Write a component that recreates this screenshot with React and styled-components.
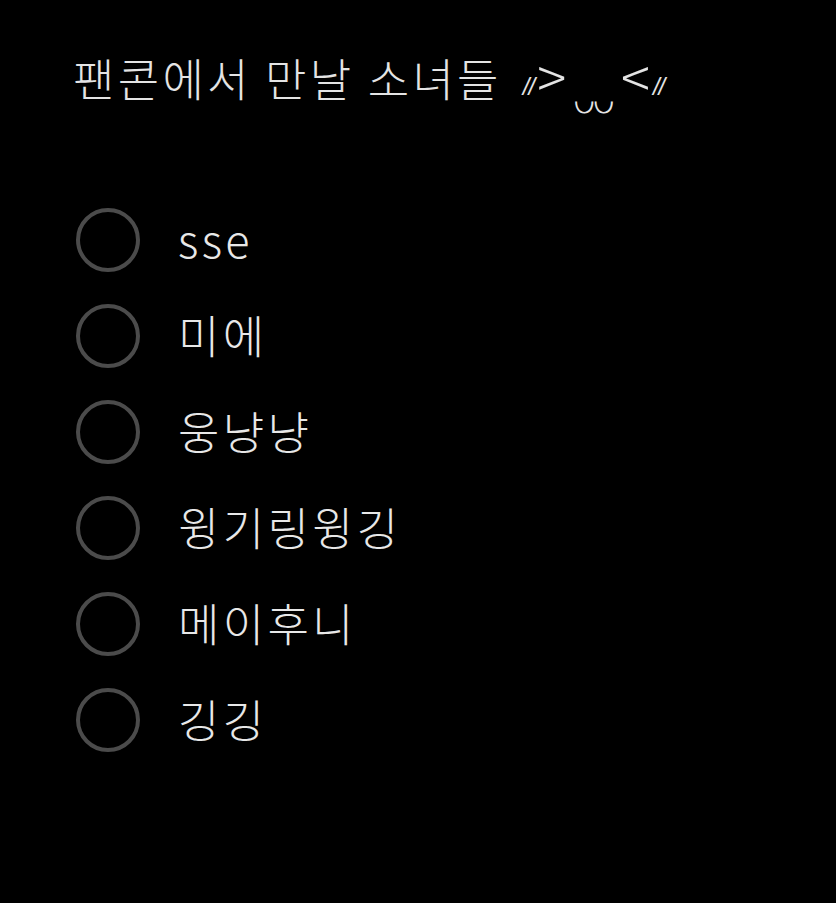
import React from 'react';
import styled, { createGlobalStyle } from 'styled-components';

const GlobalStyle = createGlobalStyle`
  html, body {
    margin: 0;
    padding: 0;
    background: #000;
  }
  body {
    font-family: "Noto Sans CJK KR", "Noto Sans", sans-serif;
  }
`;

const Page = styled.div`
  min-height: 903px;
  background: #000;
  padding: 46px 0 0 73px;
  box-sizing: border-box;
`;

const Title = styled.h1`
  margin: 0;
  display: flex;
  align-items: center;
  font-size: 45px;
  font-weight: 300;
  line-height: 64px;
  letter-spacing: 3.3px;
  color: #e4e4e4;
  white-space: pre;
`;

const Face = styled.span`
  display: inline-flex;
  align-items: flex-end;
  margin-left: 18px;
  letter-spacing: 0;
  color: #e4e4e4;
  height: 64px;
`;

const Blush = styled.span`
  font-family: "Liberation Sans", sans-serif;
  font-size: 24px;
  line-height: 1;
  letter-spacing: -1px;
  font-style: italic;
  margin: 0 3px 11px 3px;
`;

const Eye = styled.span`
  font-size: 54px;
  font-weight: 300;
  line-height: 1;
  margin-bottom: 8px;
`;

const Mouth = styled.span`
  font-family: "DejaVu Sans", sans-serif;
  font-size: 40px;
  line-height: 1;
  letter-spacing: -5px;
  margin: 0 10px -9px 6px;
`;

const Options = styled.ul`
  list-style: none;
  margin: 98px 0 0 0;
  padding: 0;
  display: flex;
  flex-direction: column;
  gap: 32px;
`;

const Option = styled.li`
  display: flex;
  align-items: center;
  gap: 38px;
  height: 64px;
  cursor: pointer;
`;

const Radio = styled.span`
  width: 64px;
  height: 64px;
  margin-left: 3px;
  box-sizing: border-box;
  border-radius: 50%;
  border: 4px solid ${(props) => (props.checked ? '#e6e6e6' : '#4b4b4b')};
  flex-shrink: 0;
`;

const Label = styled.span`
  font-size: 45px;
  font-weight: 300;
  line-height: 64px;
  letter-spacing: 3.3px;
  color: #e8e8e8;
  margin-top: -2px;
`;

const choices = ['sse', '미에', '웅냥냥', '윙기링윙깅', '메이후니', '깅깅'];

const App = () => {
  return (
    <>
      <GlobalStyle />
      <Page>
        <Title>
          팬콘에서 만날 소녀들
          <Face>
            <Blush>//</Blush>
            <Eye>&gt;</Eye>
            <Mouth>ᴗᴗ</Mouth>
            <Eye>&lt;</Eye>
            <Blush>//</Blush>
          </Face>
        </Title>
        <Options>
          {choices.map((name) => (
            <Option key={name}>
              <Radio />
              <Label>{name}</Label>
            </Option>
          ))}
        </Options>
      </Page>
    </>
  );
};

export default App;
